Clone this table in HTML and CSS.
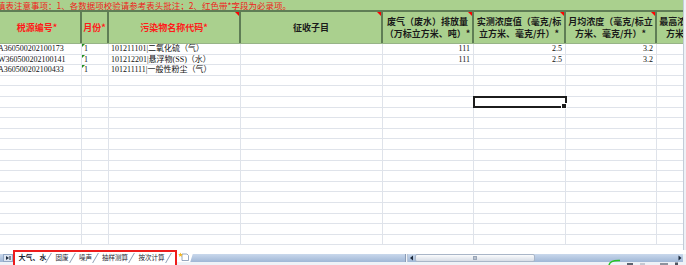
FILE: index.html
```html
<!DOCTYPE html>
<html lang="zh-CN">
<head>
<meta charset="utf-8">
<title>税源明细</title>
<link rel="stylesheet" href="styles.css">
</head>
<body>
<div class="app">
  <div class="main">
    <div class="sheet">
      <div class="notice">填表注意事项：1、各数据项校验请参考表头批注；2、红色带*字段为必录项。</div>
      <div class="grid">
        <div class="row head">
          <div class="c req">税源编号*</div>
          <div class="c req">月份*</div>
          <div class="c req cmt">污染物名称代码*</div>
          <div class="c cmt">征收子目</div>
          <div class="c cmt">废气（废水）排放量<br>（万标立方米、吨）*</div>
          <div class="c cmt">实测浓度值（毫克/标<br>立方米、毫克/升）*</div>
          <div class="c cmt">月均浓度（毫克/标立<br>方米、毫克/升）*</div>
          <div class="c">最高浓度（毫克/标立<br>方米、毫克/升）*</div>
        </div>
        <div class="row data">
          <div class="c">A360500202100173</div><div class="c tri">1</div><div class="c">101211101|二氧化硫（气）</div><div class="c"></div><div class="c num">111</div><div class="c num">2.5</div><div class="c num">3.2</div><div class="c"></div>
        </div>
        <div class="row data">
          <div class="c">W360500202100141</div><div class="c tri">1</div><div class="c">101212201|悬浮物(SS)（水）</div><div class="c"></div><div class="c num">111</div><div class="c num">2.5</div><div class="c num">3.2</div><div class="c"></div>
        </div>
        <div class="row data">
          <div class="c">A360500202100433</div><div class="c tri">1</div><div class="c">101211111|一般性粉尘（气）</div><div class="c"></div><div class="c num"></div><div class="c num"></div><div class="c num"></div><div class="c"></div>
        </div>
        <div class="row data"><div class="c"></div><div class="c"></div><div class="c"></div><div class="c"></div><div class="c"></div><div class="c"></div><div class="c"></div><div class="c"></div></div>
        <div class="row data"><div class="c"></div><div class="c"></div><div class="c"></div><div class="c"></div><div class="c"></div><div class="c"></div><div class="c"></div><div class="c"></div></div>
        <div class="row data"><div class="c"></div><div class="c"></div><div class="c"></div><div class="c"></div><div class="c"></div><div class="c sel"></div><div class="c"></div><div class="c"></div></div>
        <div class="row data"><div class="c"></div><div class="c"></div><div class="c"></div><div class="c"></div><div class="c"></div><div class="c"></div><div class="c"></div><div class="c"></div></div>
        <div class="row data"><div class="c"></div><div class="c"></div><div class="c"></div><div class="c"></div><div class="c"></div><div class="c"></div><div class="c"></div><div class="c"></div></div>
        <div class="row data"><div class="c"></div><div class="c"></div><div class="c"></div><div class="c"></div><div class="c"></div><div class="c"></div><div class="c"></div><div class="c"></div></div>
        <div class="row data"><div class="c"></div><div class="c"></div><div class="c"></div><div class="c"></div><div class="c"></div><div class="c"></div><div class="c"></div><div class="c"></div></div>
        <div class="row data"><div class="c"></div><div class="c"></div><div class="c"></div><div class="c"></div><div class="c"></div><div class="c"></div><div class="c"></div><div class="c"></div></div>
        <div class="row data"><div class="c"></div><div class="c"></div><div class="c"></div><div class="c"></div><div class="c"></div><div class="c"></div><div class="c"></div><div class="c"></div></div>
        <div class="row data"><div class="c"></div><div class="c"></div><div class="c"></div><div class="c"></div><div class="c"></div><div class="c"></div><div class="c"></div><div class="c"></div></div>
        <div class="row data"><div class="c"></div><div class="c"></div><div class="c"></div><div class="c"></div><div class="c"></div><div class="c"></div><div class="c"></div><div class="c"></div></div>
        <div class="row data"><div class="c"></div><div class="c"></div><div class="c"></div><div class="c"></div><div class="c"></div><div class="c"></div><div class="c"></div><div class="c"></div></div>
        <div class="row data"><div class="c"></div><div class="c"></div><div class="c"></div><div class="c"></div><div class="c"></div><div class="c"></div><div class="c"></div><div class="c"></div></div>
        <div class="row data"><div class="c"></div><div class="c"></div><div class="c"></div><div class="c"></div><div class="c"></div><div class="c"></div><div class="c"></div><div class="c"></div></div>
        <div class="row data"><div class="c"></div><div class="c"></div><div class="c"></div><div class="c"></div><div class="c"></div><div class="c"></div><div class="c"></div><div class="c"></div></div>
        <div class="row data"><div class="c"></div><div class="c"></div><div class="c"></div><div class="c"></div><div class="c"></div><div class="c"></div><div class="c"></div><div class="c"></div></div>
      </div>
    </div>
    <div class="vbar"></div>
  </div>
  <div class="bottom">
    <div class="nav">
      <svg width="10" height="8" viewBox="0 0 10 8"><rect x="0.5" y="0.5" width="9" height="7" fill="#dde6f2" stroke="#93a8c6"/><path d="M3 2 L6 4 L3 6 Z" fill="#1d2a3c"/><rect x="6.5" y="2" width="1" height="4" fill="#1d2a3c"/></svg>
    </div>
    <div class="tabs">
      <span class="tab active t1">大气、水</span>
      <span class="tab t2">固废</span>
      <span class="tab t3">噪声</span>
      <span class="tab t4">抽样测算</span>
      <span class="tab t5">按次计算</span>
    </div>
    <div class="newtab">
      <svg width="12" height="9" viewBox="0 0 12 9"><path d="M4 2 H9 L10.5 3.5 V8.5 H4 Z" fill="#fff" stroke="#7f93b0" stroke-width="0.8"/><path d="M2.5 0.5 L3.2 2 L4.8 2.2 L3.6 3.2 L4 4.8 L2.5 3.9 L1 4.8 L1.4 3.2 L0.2 2.2 L1.8 2 Z" fill="#f2b623"/></svg>
    </div>
    <div class="band"></div>
    <div class="hs">
      <div class="scroll">
        <div class="split"></div>
        <div class="arr">
          <svg width="7" height="8" viewBox="0 0 7 8"><path d="M5 1.5 L2 4 L5 6.5 Z" fill="#1d2a3c"/></svg>
        </div>
        <div class="thumb"><span class="grip"></span></div>
        <div class="track"></div>
        <div class="arr r">
          <svg width="6" height="8" viewBox="0 0 6 8"><path d="M1.5 1.5 L4.5 4 L1.5 6.5 Z" fill="#1d2a3c"/></svg>
        </div>
        <div class="tail"></div>
      </div>
      <div class="status">
        <svg width="281" height="3" viewBox="0 0 281 3" overflow="visible"><path d="M204 4 Q204 -2 215 -1.5" fill="none" stroke="#27c427" stroke-width="1.6"/><rect x="222" y="1" width="6" height="2" fill="#5d6470"/><rect x="235" y="1" width="5" height="2" fill="#c3c9d2"/><rect x="255" y="1" width="8" height="2" fill="#8c939e"/><rect x="270" y="0.5" width="3" height="2.5" fill="#4c535e"/></svg>
      </div>
    </div>
  </div>
</div>
</body>
</html>
```
FILE: styles.css
```css
* { box-sizing: border-box; margin: 0; padding: 0; }
html, body { width: 686px; height: 265px; overflow: hidden; background: #fff; }
body { font-family: "Liberation Serif", "Noto Sans CJK SC", serif; color: #111; }

.app { display: flex; flex-direction: column; height: 265px; width: 686px; }
.main { display: flex; flex: 1; min-height: 0; }
.sheet { flex: 1; min-width: 0; overflow: hidden; display: flex; flex-direction: column; }
.vbar { width: 3px; background: #eef1f6; border-left: 1px solid #c3ccd8; }

.notice {
  height: 12px; flex: none;
  background: #aad08e;
  border-bottom: 2px solid #5f7d55;
  color: #ee1d1d;
  font-family: "Noto Sans CJK SC", sans-serif;
  font-size: 8.5px; line-height: 10px;
  white-space: nowrap; overflow: hidden;
  text-indent: -3px;
}

.grid { margin-left: -6px; width: 754px; }
.row { display: grid; grid-template-columns: 88px 27px 132px 142px 91px 92px 91px 91px; }

.head { height: 32px; background: #aad08e; border-bottom: 1px solid #97b487; }
.head .c {
  position: relative;
  border-right: 2px solid #5f7d55;
  display: flex; align-items: center; justify-content: center;
  text-align: center; white-space: nowrap; overflow: hidden;
  font-family: "Noto Sans CJK SC", sans-serif;
  font-weight: bold; font-size: 9px; line-height: 12px;
  color: #1a1a1a;
}
.head .c.req { color: #ff1a1a; }
.head .c.cmt::after {
  content: ""; position: absolute; top: 0; right: 0;
  border-top: 4px solid #ff0000; border-left: 4px solid transparent;
}

.data { height: 10.6px; border-bottom: 1px solid #dfe3ea; font-size: 8px; line-height: 10px; }
.data .c {
  position: relative;
  border-right: 1px solid #dfe3ea;
  padding: 0 2px; white-space: nowrap; overflow: hidden;
}
.data .c:first-child { padding-left: 4px; }
.data .c.num { text-align: right; padding-right: 3px; }
.data .c.tri::before {
  content: ""; position: absolute; top: 0; left: 0;
  border-top: 3px solid #1f8f1f; border-right: 3px solid transparent;
}
.data .c.sel { overflow: visible; outline: 2px solid #1c1c1c; outline-offset: -1px; z-index: 2; }
.data .c.sel::after {
  content: ""; position: absolute; right: -2px; bottom: -2px;
  width: 4px; height: 4px; background: #1c1c1c; border: 1px solid #fff;
}

.bottom {
  height: 15px; flex: none; display: flex;
  background: linear-gradient(#fff 0 4px, #c9d8ec 4px, #a0b7d6 12px, #eef2f7 12px);
}
.nav { width: 15px; padding: 4px 0 0 3px; }
.nav svg { display: block; }

.tabs {
  width: 160px; height: 13px; align-self: flex-end;
  display: flex; background: #fff;
  outline: 2px solid #ee1c1c;
  font-family: "Noto Sans CJK SC", sans-serif;
  font-size: 6.5px; line-height: 11px; color: #1d2533;
}
.tab { position: relative; text-align: center; white-space: nowrap; }
.tab::after {
  content: ""; position: absolute; right: 1px; top: 1px; bottom: 2px;
  border-right: 1px solid #8d9db5; transform: skewX(-30deg);
}
.tab.active { font-size: 7px; font-weight: bold; }
.t1 { width: 35px; }
.t2 { width: 24px; }
.t3 { width: 23px; }
.t4 { width: 36px; }
.t5 { width: 37px; }

.newtab {
  width: 17px; height: 12px; margin-left: 2px;
  background: #fff; padding: 2px 0 0 1px;
  clip-path: polygon(0 0, 100% 0, 78% 100%, 0 100%);
}
.newtab svg { display: block; }

.band { flex: 1; }

.hs { width: 281px; display: flex; flex-direction: column; }
.scroll { margin-top: 4px; height: 8px; display: flex; }
.split { width: 3px; background: #f3f6fa; border-left: 1px solid #8a9bb5; border-right: 1px solid #b9c6d8; }
.arr { width: 7px; }
.arr.r { width: 6px; }
.arr svg { display: block; }
.thumb {
  width: 120px; display: flex; align-items: center; justify-content: center;
  background: linear-gradient(#fbfcfd, #d7dde6);
  border: 1px solid #a9b6c8; border-radius: 2px;
}
.grip { width: 4px; height: 4px; background: #b9c2cf; border: 1px solid #9aa6b8; }
.track { flex: 1; }
.tail { width: 3px; background: #eef1f6; }
.status { height: 3px; }
.status svg { display: block; }
```
